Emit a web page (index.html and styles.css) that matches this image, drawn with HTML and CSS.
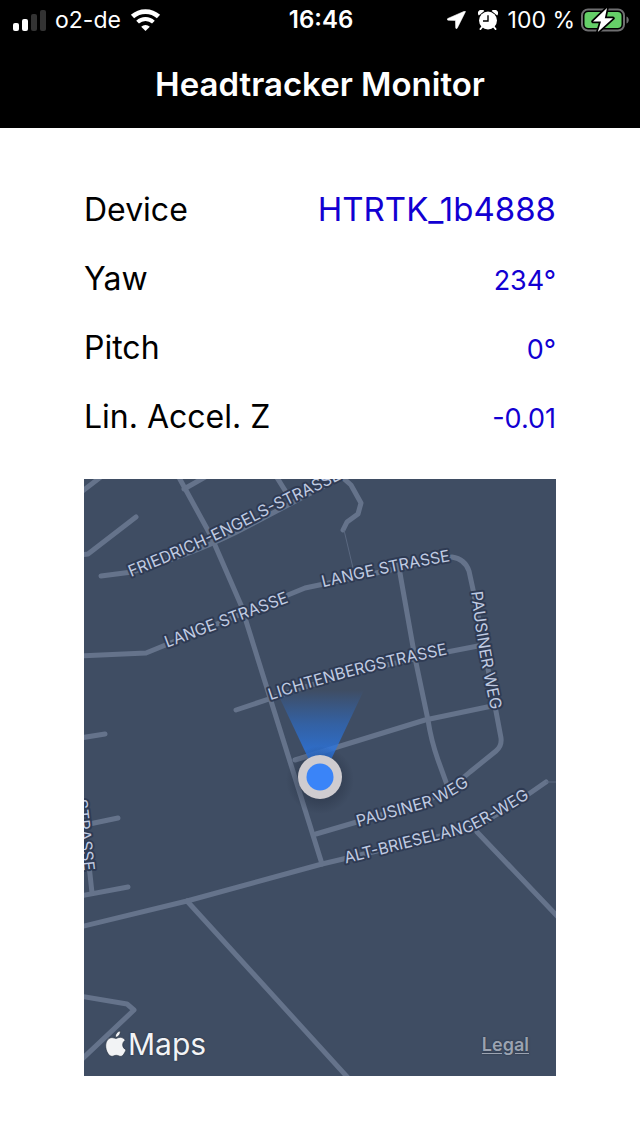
FILE: index.html
```html
<!DOCTYPE html>
<html lang="en">
<head>
<meta charset="utf-8">
<meta name="viewport" content="width=device-width, initial-scale=1">
<title>Headtracker Monitor</title>
<link rel="stylesheet" href="styles.css">
</head>
<body>
<header class="top">
  <div class="status">
    <div class="status-left">
      <svg class="signal" width="33" height="21" viewBox="0 0 33 21" aria-hidden="true">
        <rect x="0" y="13" width="6" height="8" rx="2" fill="#fff"/>
        <rect x="9" y="9" width="6" height="12" rx="2" fill="#fff"/>
        <rect x="18" y="4" width="6" height="17" rx="2" fill="#333"/>
        <rect x="27" y="0" width="6" height="21" rx="2" fill="#333"/>
      </svg>
      <span>o2-de</span>
      <svg width="32" height="22" viewBox="0 0 32 22" aria-hidden="true">
        <g fill="none" stroke="#fff">
          <path d="M2.500 7.600a19.200 19.200 0 0 1 26 0" stroke-width="4.800"/>
          <path d="M7.600 13.100a11.600 11.600 0 0 1 15.800 0" stroke-width="4"/>
        </g>
        <path d="M15.500 22l-4.300-4.300a6.200 6.200 0 0 1 8.600 0z" fill="#fff"/>
      </svg>
    </div>
    <time class="clock">16:46</time>
    <div class="status-right">
      <svg class="locate" width="19" height="18" viewBox="0 0 19 18" aria-hidden="true">
        <path d="M17.500.2L.8 7.500c-1 .5-.8 1.600.3 1.700l7.400.2.2 7.400c.1 1.100 1.200 1.200 1.600.2L18.300 1C18.600.3 18.200 0 17.500.2z" fill="#fff" stroke="#fff" stroke-width=".6"/>
      </svg>
      <svg class="alarm" width="20" height="20" viewBox="0 0 20 20" aria-hidden="true">
        <path d="M.8 5.400A3.500 3.500 0 0 1 6.300.9zM19.200 5.400A3.500 3.500 0 0 0 13.700.9z" fill="#fff"/>
        <path d="M4.500 16.500l-2 2.500M15.500 16.500l2 2.500" stroke="#fff" stroke-width="2" stroke-linecap="round"/>
        <circle cx="10" cy="10.500" r="9" fill="#fff"/>
        <path d="M10 5.200v5.800H5" fill="none" stroke="#000" stroke-width="1.400"/>
      </svg>
      <span>100 %</span>
      <svg class="battery" width="48" height="24" viewBox="0 0 48 24" aria-hidden="true">
        <rect x="1" y="1.500" width="42" height="21" rx="6" fill="none" stroke="#6e6e70" stroke-width="2"/>
        <path d="M45.500 8.500c3 1.200 3 5.800 0 7z" fill="#6e6e70"/>
        <rect x="3.500" y="4" width="37" height="16" rx="4" fill="#65cf68"/>
        <path d="M26 0L12 13.500h8L16.800 24 32 10.300h-8.200z" fill="#fff" stroke="#000" stroke-width="3.500" stroke-linejoin="round"/>
        <path d="M26 0L12 13.500h8L16.800 24 32 10.300h-8.200z" fill="#fff"/>
      </svg>
    </div>
  </div>
  <h1 class="title">Headtracker Monitor</h1>
</header>
<main class="content">
  <dl class="readings">
    <div class="row"><dt>Device</dt><dd class="device">HTRTK_1b4888</dd></div>
    <div class="row"><dt>Yaw</dt><dd>234°</dd></div>
    <div class="row"><dt>Pitch</dt><dd>0°</dd></div>
    <div class="row"><dt>Lin. Accel. Z</dt><dd>-0.01</dd></div>
  </dl>
  <section class="map" aria-label="Map">
    <svg class="streets" viewBox="84 479 472 597">
      <defs>
        <linearGradient id="beam" x1="0" y1="690" x2="0" y2="760" gradientUnits="userSpaceOnUse">
          <stop offset="0" stop-color="#2b72d8" stop-opacity="0"/>
          <stop offset=".5" stop-color="#2b6fd0" stop-opacity=".6"/>
          <stop offset="1" stop-color="#2b76e4" stop-opacity=".9"/>
        </linearGradient>
        <radialGradient id="shade">
          <stop offset=".6" stop-color="#1c2536" stop-opacity=".3"/>
          <stop offset="1" stop-color="#1c2536" stop-opacity="0"/>
        </radialGradient>
        <path id="friedrich" d="M131 577L165 563Q220 540 271 513L323 488L380 460"/>
        <path id="lange-west" d="M156 652L300 598"/>
        <path id="lange-east" d="M312 590Q380 573 462 559"/>
        <path id="lichtenberg" d="M259 704Q350 673 460 652"/>
        <path id="pausiner-north" d="M470 583Q477 650 493 719"/>
        <path id="pausiner-south" d="M346 830L430 807Q450 799 480 778"/>
        <path id="alt" d="M332 867L470 832Q500 817 542 790"/>
        <path id="west" d="M72 765L84 877"/>
      </defs>
      <g class="roads">
        <path d="M80 493L102 476M80 555L88 554L136 517M101 576L132 572Q200 552 250 525L345 475"/>
        <path d="M176 472L211 536L241 605L322 864M184 489L207 476M276 476L286 492"/>
        <path d="M80 656L146 653L305 588Q380 572 452 557Q465 559 469 571L474 594L501 738Q502 746 496 751L470 772Q450 790 425 802L316 834"/>
        <path d="M342 477L351 485L361 503L358 514L347 522L343 530"/>
        <path d="M398 562L415 658L428 720Q431 740 438 760L450 793"/>
        <path d="M236 710L275 697Q350 670 478 646M295 760L425 720L492 706"/>
        <path d="M80 738L105 734M80 826L118 818M89 865L92 893M80 896L128 887"/>
        <path d="M80 927L187 901L322 864L470 829Q495 818 546 782"/>
        <path d="M187 901L350 1080M477 832L560 919M80 996L127 1004L134 1010L80 1061"/>
      </g>
      <path class="footpath" d="M344 530L353 568M546 782H556"/>
      <g class="names">
        <text><textPath href="#friedrich">FRIEDRICH-ENGELS-STRASSE</textPath></text>
        <text class="mid"><textPath href="#lange-west" startOffset="50%">LANGE STRASSE</textPath></text>
        <text class="mid"><textPath href="#lange-east" startOffset="50%">LANGE STRASSE</textPath></text>
        <text class="mid"><textPath href="#lichtenberg" startOffset="50%">LICHTENBERGSTRASSE</textPath></text>
        <text class="mid"><textPath href="#pausiner-north" startOffset="50%">PAUSINER WEG</textPath></text>
        <text class="mid"><textPath href="#pausiner-south" startOffset="50%">PAUSINER WEG</textPath></text>
        <text class="mid"><textPath href="#alt" startOffset="50%">ALT-BRIESELANGER-WEG</textPath></text>
        <text class="end"><textPath href="#west" startOffset="107">STRASSE</textPath></text>
      </g>
      <path d="M320 783L276 690H364z" fill="url(#beam)"/>
      <circle cx="320" cy="780" r="34" fill="url(#shade)"/>
      <circle cx="320" cy="777" r="22" fill="#cfccd0"/>
      <circle cx="320" cy="777" r="13.500" fill="#3a84f8"/>
    </svg>
    <div class="credits">
      <div class="brand">
        <svg width="22" height="28" viewBox="0 0 22 27" preserveAspectRatio="none" aria-hidden="true">
          <g fill="#f2f3f5" stroke="#222c3c" stroke-width=".6">
            <path d="M15.300 1c.2 1.900-.5 3.300-1.500 4.400-.9 1-2.100 1.600-3.400 1.500-.2-1.700.6-3.100 1.500-4.100C12.900 1.700 14.100 1.100 15.300 1z"/>
            <path d="M11 8.200c1-.1 2.300-1.100 4.300-1.100 2 .1 3.900 1 5 2.700-3.900 2.500-3.300 7.500.7 9.200-1 2.700-3 6.300-5.300 6.400-1.700 0-2.400-1-4.400-1s-2.800 1-4.400 1C3.700 25.400.7 20 .7 15.300c0-4.800 3-7.900 6.300-8C8.700 7.300 10 8.200 11 8.200z"/>
          </g>
        </svg>
        <span>Maps</span>
      </div>
      <a class="legal" href="#legal">Legal</a>
    </div>
  </section>
</main>
</body>
</html>
```
FILE: styles.css
```css
* { box-sizing: border-box; }

body {
  margin: 0;
  background: #fff;
  color: #000;
  font-family: Inter, "Liberation Sans", sans-serif;
}

.top {
  background: #000;
  color: #fff;
  padding-bottom: 24px;
}

.status {
  display: grid;
  grid-template-columns: 1fr auto 1fr;
  align-items: center;
  height: 40px;
  padding: 0 11px 0 13px;
  font-size: 23px;
  line-height: 40px;
}

.status-left,
.status-right {
  display: flex;
  align-items: center;
  gap: 9px;
}

.status-right {
  justify-content: flex-end;
  gap: 6px;
}

.alarm { margin: 0 4px 0 6px; }

.clock {
  font-size: 24px;
  font-weight: 600;
}

.title {
  margin: 0;
  padding-top: 24px;
  font-size: 33px;
  font-weight: 600;
  line-height: 40px;
  text-align: center;
}

.content { padding: 62px 84px 60px; }

.readings {
  display: grid;
  gap: 29px;
  margin: 0 0 42px;
}

.row {
  display: flex;
  align-items: baseline;
  justify-content: space-between;
  font-size: 33px;
  line-height: 40px;
}

.row dt { font-size: 32px; }

.row dd {
  margin: 0;
  color: #1200d2;
  font-size: 27px;
  line-height: 32px;
}

.row .device { font-size: 33px; }

.map {
  display: grid;
  background: #3f4d63;
}

.streets,
.credits { grid-area: 1 / 1; }

.streets {
  display: block;
  width: 100%;
}

.roads {
  fill: none;
  stroke: #65738b;
  stroke-width: 5;
  stroke-linecap: round;
  stroke-linejoin: round;
}

.footpath {
  fill: none;
  stroke: #5a6880;
  stroke-width: 1;
}

.names text {
  fill: #c0cbe2;
  stroke: #2f3b53;
  stroke-width: 4;
  stroke-linejoin: round;
  paint-order: stroke;
  font-size: 16px;
}

.names .mid { text-anchor: middle; }
.names .end { text-anchor: end; }

.credits {
  display: flex;
  align-items: center;
  align-self: end;
  justify-content: space-between;
  padding: 0 27px 12px 21px;
}

.brand {
  display: flex;
  align-items: center;
  gap: 1px;
  color: #f2f3f5;
  font-size: 30px;
  line-height: 40px;
  text-shadow: 0 0 2px #222c3c;
}

.legal {
  color: #9ba3b1;
  font-size: 18px;
  font-weight: 600;
  text-underline-offset: 2px;
  text-shadow: 0 0 2px #222c3c;
}
```
